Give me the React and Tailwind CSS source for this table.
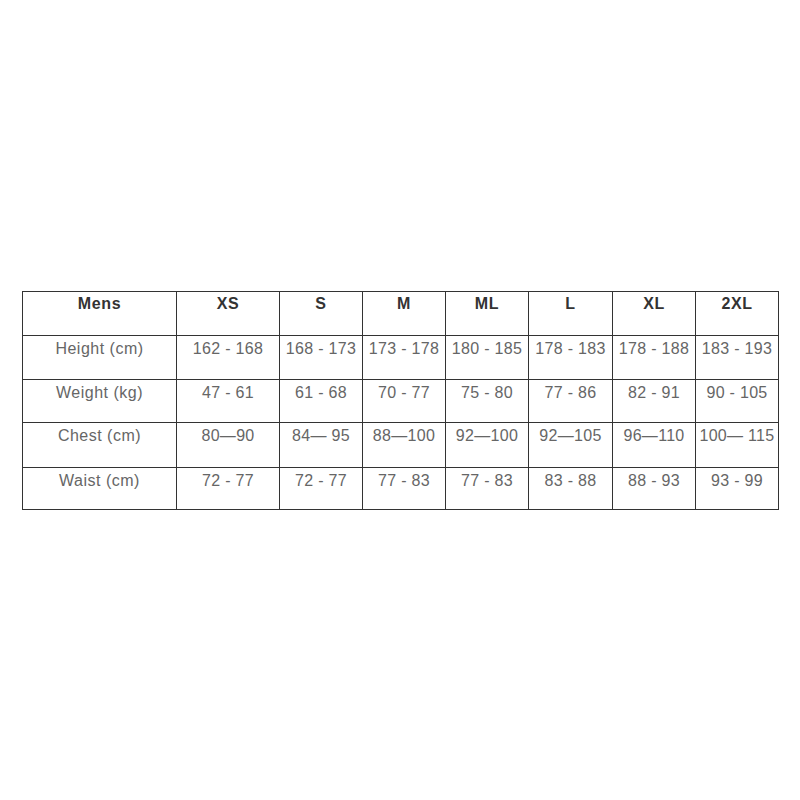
const cols = ["XS", "S", "M", "ML", "L", "XL", "2XL"];
const widths = ["w-[154px]", "w-[103px]", "w-[83px]", "w-[83px]", "w-[83px]", "w-[84px]", "w-[83px]", "w-[83px]"];

const rows = [
  { label: "Height (cm)", h: "h-[44px]", values: ["162 - 168", "168 - 173", "173 - 178", "180 - 185", "178 - 183", "178 - 188", "183 - 193"] },
  { label: "Weight (kg)", h: "h-[43px]", values: ["47 - 61", "61 - 68", "70 - 77", "75 - 80", "77 - 86", "82 - 91", "90 - 105"] },
  { label: "Chest (cm)", h: "h-[45px]", values: ["80—90", "84— 95", "88—100", "92—100", "92—105", "96—110", "100— 115"] },
  { label: "Waist (cm)", h: "h-[42px]", values: ["72 - 77", "72 - 77", "77 - 83", "77 - 83", "83 - 88", "88 - 93", "93 - 99"] },
];

export default function App() {
  return (
    <div className="w-[800px] h-[800px] bg-white pt-[291px] pl-[22px] font-['Liberation_Sans',Arial,sans-serif]">
      <table className="table-fixed border-collapse w-[757px]">
        <colgroup>
          {widths.map((w, i) => (
            <col key={i} className={w} />
          ))}
        </colgroup>
        <thead>
          {/* size header */}
          <tr className="h-[44px]">
            <th className="border border-[#333] align-top pt-[2px] text-[16px] leading-[20px] font-bold text-[#333] tracking-[0.6px]">
              Mens
            </th>
            {cols.map((c) => (
              <th key={c} className="border border-[#333] align-top pt-[2px] text-[16px] leading-[20px] font-bold text-[#333] tracking-[0.6px]">
                {c}
              </th>
            ))}
          </tr>
        </thead>
        <tbody>
          {rows.map((r) => (
            <tr key={r.label} className={r.h}>
              <td className="border border-[#333] align-top pt-[3px] text-center text-[16px] leading-[20px] text-[#666] tracking-[0.5px]">
                {r.label}
              </td>
              {r.values.map((v, i) => (
                <td key={i} className="border border-[#333] align-top pt-[3px] text-center text-[16px] leading-[20px] text-[#666] tracking-[0.3px] whitespace-nowrap">
                  {v}
                </td>
              ))}
            </tr>
          ))}
        </tbody>
      </table>
    </div>
  );
}
